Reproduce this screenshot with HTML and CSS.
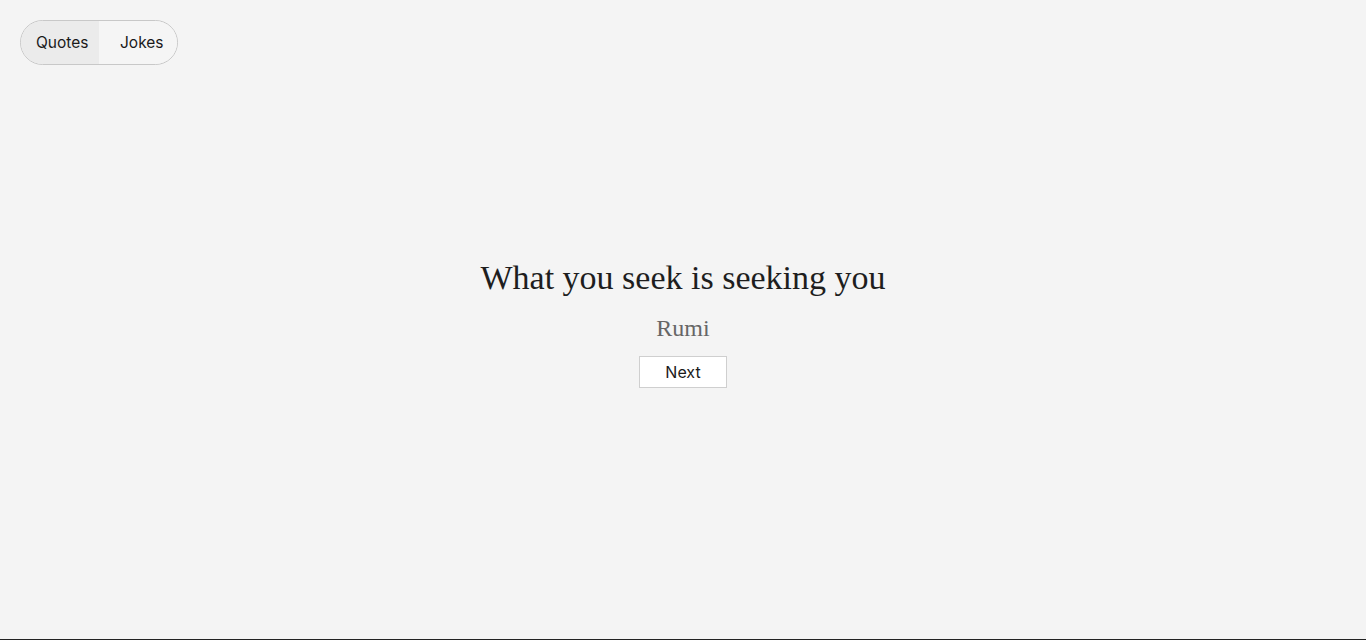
FILE: index.html
```html
<!DOCTYPE html>
<html lang="en">
<head>
<meta charset="utf-8">
<title>Quotes</title>
<link rel="stylesheet" href="styles.css">
</head>
<body>
<div class="page">
  <nav class="toggle">
    <button class="seg seg-quotes active">Quotes</button>
    <button class="seg seg-jokes">Jokes</button>
  </nav>
  <main class="content">
    <h1 class="quote">What you seek is seeking you</h1>
    <p class="author">Rumi</p>
    <button class="next">Next</button>
  </main>
</div>
</body>
</html>
```
FILE: styles.css
```css
* { box-sizing: border-box; }
html, body { margin: 0; padding: 0; }
body {
  background: #f4f4f4;
  height: 640px;
  overflow: hidden;
}
.page {
  height: 640px;
  border-bottom: 1px solid #222;
  position: relative;
  display: flex;
  flex-direction: column;
}
.toggle {
  position: absolute;
  top: 20px;
  left: 20px;
  display: flex;
  height: 45px;
  border: 1px solid #c8c8c8;
  border-radius: 23px;
  overflow: hidden;
}
.seg {
  border: 0;
  margin: 0;
  width: 78px;
  font-family: "Inter", "Liberation Sans", sans-serif;
  font-size: 15.5px;
  color: #1a1a1a;
  background: #f5f5f5;
  text-align: left;
  padding: 0;
}
.seg-quotes { padding-left: 15px; }
.seg-jokes { padding-left: 21px; }
.seg.active { background: #ebebeb; }
.content {
  flex: 1;
  display: flex;
  flex-direction: column;
  align-items: center;
  justify-content: center;
  padding-top: 7px;
}
.quote {
  margin: 0;
  font-family: "Liberation Serif", "DejaVu Serif", serif;
  font-weight: normal;
  font-size: 34px;
  line-height: 40px;
  color: #1e1e1e;
}
.author {
  margin: 15px 0 0;
  font-family: "Liberation Serif", "DejaVu Serif", serif;
  font-size: 24px;
  line-height: 30px;
  color: #666;
}
.next {
  margin-top: 13px;
  width: 88px;
  height: 32px;
  background: #fff;
  border: 1px solid #cfcfcf;
  font-family: "Inter", "Liberation Sans", sans-serif;
  font-size: 16px;
  color: #1a1a1a;
  padding: 0;
}
```
